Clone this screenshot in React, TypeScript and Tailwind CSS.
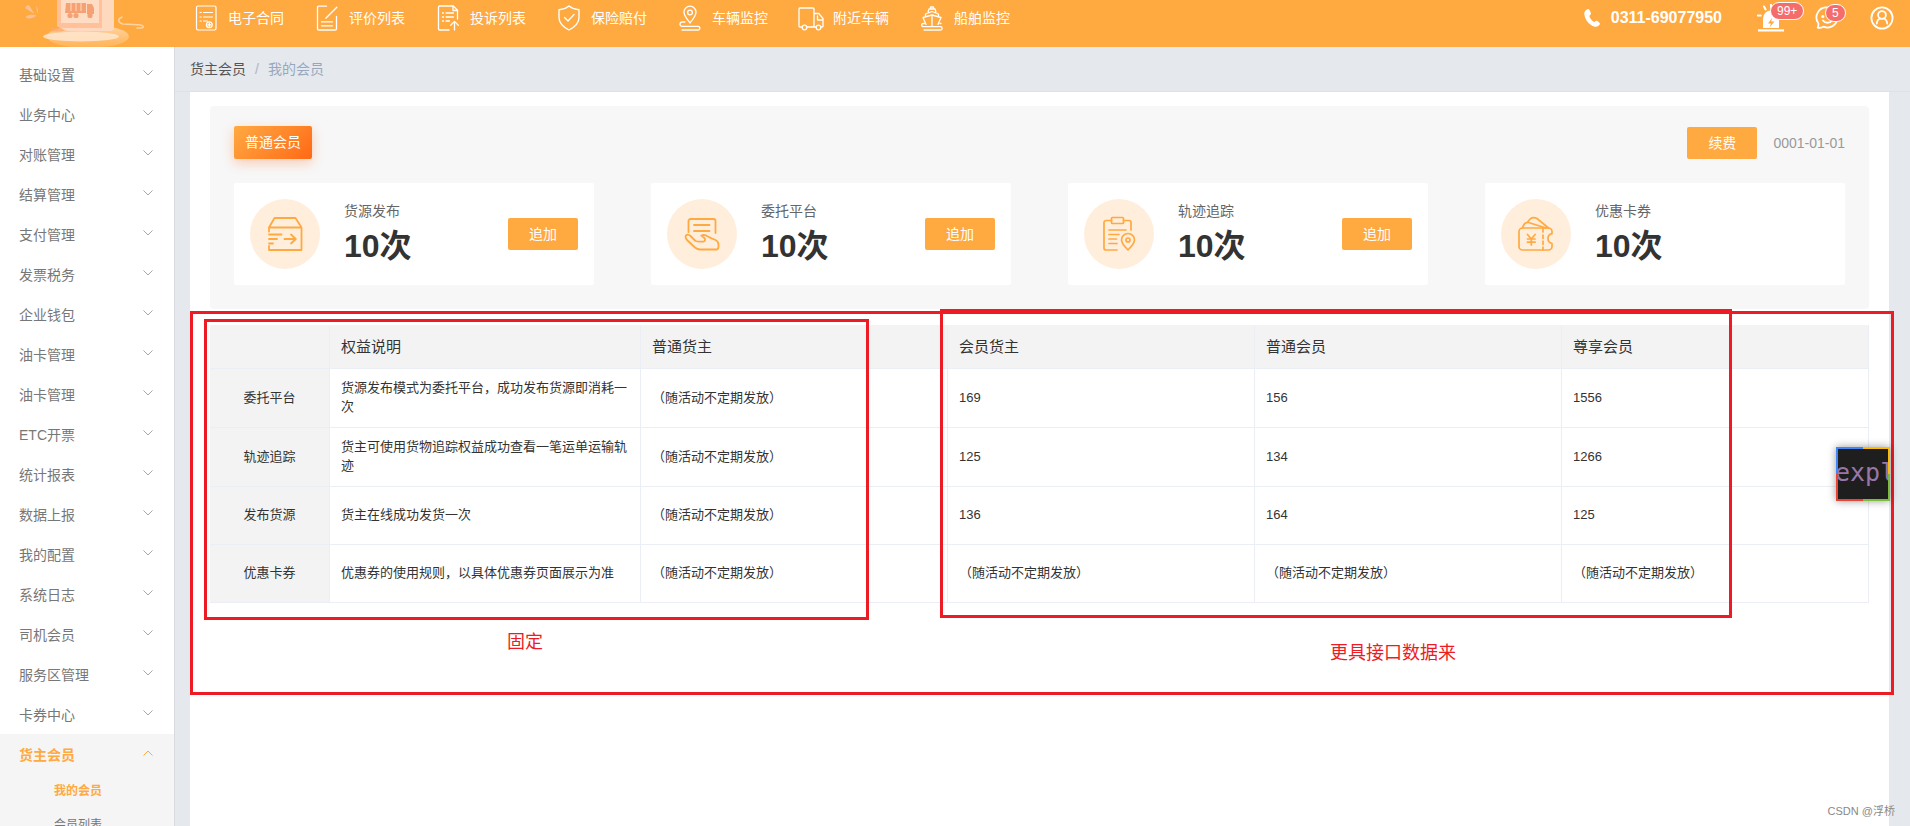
import React from "react";

type IconProps = { className?: string };

const stroke = {
  fill: "none",
  stroke: "currentColor",
  strokeLinecap: "round" as const,
  strokeLinejoin: "round" as const,
};

const ContractIcon = () => (
  <svg viewBox="0 0 26 26" className="h-[26px] w-[26px] shrink-0" {...stroke} strokeWidth="1.2">
    <rect x="3.5" y="1" width="19.5" height="24" rx="1.5" />
    <path d="M7 7.500h1.200M10.500 7.500h9M7 12h1.200M10.500 12h9M7 16h1.200M10.500 16h4" />
    <circle cx="16.300" cy="19.800" r="2.900" />
    <path d="M16.300 18.200v3.200M14.700 19.800h3.200" />
  </svg>
);
const ReviewIcon = () => (
  <svg viewBox="0 0 26 26" className="h-[26px] w-[26px] shrink-0" {...stroke} strokeWidth="1.3">
    <path d="M12.500 1.200H4.700A1.200 1.200 0 0 0 3.500 2.400v21.400A1.200 1.200 0 0 0 4.700 25h16.600a1.200 1.200 0 0 0 1.200-1.200V11.500" />
    <path d="M22.800 2.200 11.800 13.200M7.500 16.800h11M7.500 20.800h11" />
  </svg>
);
const ComplaintIcon = () => (
  <svg viewBox="0 0 26 26" className="h-[26px] w-[26px] shrink-0" {...stroke} strokeWidth="1.3">
    <path d="M14 25H4.700a1.200 1.200 0 0 1-1.200-1.200V2.200A1.200 1.200 0 0 1 4.700 1h13.500L22.500 5.200V14" />
    <path d="M18 1.200v4.300h4.500M7.500 8h1M11 8h7.500M7.500 12h1M11 12h7.500M7.500 16h1M11 16h3.500M19.500 25v-8.500M15.700 20.200l3.800-3.800 3.800 3.800" />
  </svg>
);
const ShieldIcon = () => (
  <svg viewBox="0 0 26 26" className="h-[26px] w-[26px] shrink-0" {...stroke} strokeWidth="1.4">
    <path d="M13 1c2.800 2.200 6.300 3.600 10 3.700v7.800c0 5.500-4.200 9.500-10 12.500-5.800-3-10-7-10-12.500V4.700C6.700 4.600 10.200 3.200 13 1Z" />
    <path d="m8.500 12.500 3.500 3.500 6-6.500" />
  </svg>
);
const TrackIcon = () => (
  <svg viewBox="0 0 26 26" className="h-[26px] w-[26px] shrink-0" {...stroke} strokeWidth="1.3">
    <path d="M13 18C9.500 13.500 7 10.500 7 7.200a6 6 0 0 1 12 0c0 3.300-2.500 6.300-6 10.800Z" />
    <circle cx="13" cy="7.500" r="2.400" />
    <path d="M8 17H4.700a2.200 2.200 0 0 0 0 4.300H21a1.800 1.800 0 0 1 0 3.700H5" />
  </svg>
);
const TruckIcon = () => (
  <svg viewBox="0 0 26 26" className="h-[26px] w-[26px] shrink-0" {...stroke} strokeWidth="1.3">
    <path d="M4 22H2a1 1 0 0 1-1-1V4a1 1 0 0 1 1-1h13a1 1 0 0 1 1 1v18H9M16 8.500h4.800L25 13.500V21a1 1 0 0 1-1 1h-1M18 22h-2M19.500 11v4H25" />
    <circle cx="6.500" cy="22.500" r="2.300" />
    <circle cx="20.500" cy="22.500" r="2.300" />
  </svg>
);
const ShipIcon = () => (
  <svg viewBox="0 0 26 26" className="h-[26px] w-[26px] shrink-0" {...stroke} strokeWidth="1.3">
    <path d="M11.500 4V2h3v2M9 7l1-3h6l1 3M6.500 11.500V9L13 6.500 19.500 9v2.500M13 10v11M7 19.500l-3-7L13 10l9 2.500-3 7" />
    <path d="M5.500 18.500H4.200a1.600 1.600 0 0 0 0 3.200h17.300a1.600 1.600 0 0 1 0 3.300H5M21 18.500h1" />
  </svg>
);

const topNav = [
  { label: "电子合同", Icon: ContractIcon },
  { label: "评价列表", Icon: ReviewIcon },
  { label: "投诉列表", Icon: ComplaintIcon },
  { label: "保险赔付", Icon: ShieldIcon },
  { label: "车辆监控", Icon: TrackIcon },
  { label: "附近车辆", Icon: TruckIcon },
  { label: "船舶监控", Icon: ShipIcon },
];

const Logo = () => (
  <svg viewBox="0 0 193 47" className="h-[47px] w-[193px] shrink-0" aria-hidden="true">
    <defs>
      <linearGradient id="base" x1="0" y1="0" x2="0" y2="1">
        <stop offset="0" stopColor="#fff" stopOpacity=".55" />
        <stop offset="1" stopColor="#ffc680" stopOpacity=".35" />
      </linearGradient>
    </defs>
    <g fill="#ffc39c" opacity=".9">
      <path d="M25 8c1-2 2.500-3 4-3l5.500 9ZM26 16.500c3-2 6-2 10.500-1-3 2.500-7 3.500-10 2.500ZM36 5.500c2 2.500 2.500 5 1.500 8.500Z" />
    </g>
    <ellipse cx="88" cy="36.500" rx="41" ry="11.500" fill="url(#base)" />
    <ellipse cx="81" cy="36.500" rx="38" ry="5" fill="#ffe6cf" opacity=".85" />
    <path d="M50 28h20l-8 3.500H52Z" fill="#ffa767" opacity=".7" />
    <path d="M57 0h57v26c0 3-1 5-4 5H70c-4 0-7-2-13-5Z" fill="#ffd9bd" />
    <path d="M57 0h45v28H65c-5 0-8-1-8-4Z" fill="#ffc09a" />
    <path d="M61 0h38v23H61Z" fill="#ffdcc4" />
    <g fill="#f5a173">
      <path d="M66 3h20v10H65ZM87 4h5l2 4v6h-7Z" />
      <circle cx="70" cy="15.500" r="2.600" />
      <circle cx="76" cy="15.500" r="2.600" />
      <circle cx="90" cy="15.500" r="2.600" />
    </g>
    <path d="M71 3v8M76 3v8M81 3v8" stroke="#ffd1b1" strokeWidth="1.200" />
    <path
      d="M122 17c-5 2-4 6 1 7 7 1 14 0 19 1.500 3 1.500 1 3-5 2.500"
      fill="none"
      stroke="#ffd3a0"
      strokeWidth="1.500"
      strokeLinecap="round"
    />
  </svg>
);

const PhoneIcon = () => (
  <svg viewBox="0 0 16 18" className="h-[18px] w-4 shrink-0" fill="currentColor" aria-hidden="true">
    <path d="M3.500.3c.8-.5 1.500-.1 2 .8l1.300 2.700c.4.900.1 1.500-.6 2.100-.8.600-.9 1.100-.5 2.100.9 2 2 3.400 3.700 4.600.8.500 1.300.4 2-.3.600-.6 1.300-.8 2.100-.2l1.900 1.700c.7.700.7 1.300.1 2-1.300 1.700-3.300 2.300-5.500 1.600C5 15.800.8 10.600.3 5 .1 2.900 1.300 1.200 3.500.3Z" />
  </svg>
);

const AlarmIcon = () => (
  <svg viewBox="0 0 28 28" className="h-7 w-7" fill="currentColor" aria-hidden="true">
    <path d="M6 24V14.500a8 8 0 0 1 16 0V24Z" />
    <path d="M1 25.300h26v2.200H1Z" />
    <path
      d="M14 .8v3M7 2.500l1.600 3M.8 11.500h3M21.500 2.500l-1.800 3.100"
      stroke="currentColor"
      strokeWidth="2"
      strokeLinecap="round"
    />
    <path d="m15 14-4 5.500h3l-1.500 4 5-6h-3.200Z" fill="#ffa941" />
  </svg>
);

const MessageIcon = () => (
  <svg viewBox="0 0 24 24" className="h-6 w-6" {...stroke} strokeWidth="1.800" aria-hidden="true">
    <path d="M12.500 1.500a10 10 0 1 1-4 19.200c-1.800 1-3.800 1.300-5.800 1.100.7-1.600.9-3.100.6-4.600A10 10 0 0 1 12.500 1.500Z" />
    <path d="M8 14.500c2 3 7 3 9 0" />
    <circle cx="7.800" cy="10.500" r=".7" fill="currentColor" />
  </svg>
);

const UserIcon = () => (
  <svg viewBox="0 0 24 24" className="h-6 w-6" {...stroke} strokeWidth="1.800" aria-hidden="true">
    <circle cx="12" cy="12" r="10.600" />
    <circle cx="12" cy="9" r="3.900" />
    <path d="M6.800 17.500c.2-2.600 1.400-4.400 3.500-5M17.200 17.500c-.2-2.600-1.400-4.400-3.500-5" />
  </svg>
);

const BoxIcon = () => (
  <svg viewBox="0 0 36 36" className="h-9 w-9" {...stroke} strokeWidth="1.800">
    <path d="M2 15.500v-4L7.500 2h21L34.500 11.500V34H2v-4M2 11.500h32.500M2 18.500h12.500M2 23h8M2 27.500h4M17.500 23h11M24 18.500l4.800 4.500-4.800 4.500" />
  </svg>
);
const HandIcon = () => (
  <svg viewBox="0 0 36 36" className="h-9 w-9" {...stroke} strokeWidth="1.800">
    <path d="M4.500 16V5a2 2 0 0 1 2-2h23a2 2 0 0 1 2 2v12M10 9h15.500M10 15h15.500" />
    <path d="M2 19.500c1.500-1.500 3.500-.5 4.500.5l5 5c2 .8 5.500.5 8 .7 1.800-.5 2-2.700.8-3.700l-3-2.500c2.500-1 5-.2 6.700 1 3.500 2.200 5 2.300 7.500 3.500 2.500 1 3 3 3 5s.3 4-1.500 4.500H16c-2 0-3.500-.8-5-2l-7.500-7C1.500 22.500 1 21 2 19.500Z" />
  </svg>
);
const ClipboardIcon = () => (
  <svg viewBox="0 0 36 36" className="h-9 w-9" {...stroke} strokeWidth="1.700">
    <path d="M16 34H5a2 2 0 0 1-2-2V6.500a2 2 0 0 1 2-2h5.500M22.500 4.500H28a2 2 0 0 1 2 2V14" />
    <rect x="10.500" y="1.500" width="12" height="6" rx="1" />
    <path d="M8 14h17M8 18.500h10M8 23h7.500M8 27.500h8M27 34c-4-4-6.500-7-6.500-10a6.500 6.500 0 0 1 13 0c0 3-2.500 6-6.500 10Z" />
    <circle cx="27" cy="24" r="2" />
  </svg>
);
const CouponIcon = () => (
  <svg viewBox="0 0 36 36" className="h-9 w-9" {...stroke} strokeWidth="1.700">
    <path d="M4.500 12h26a3.500 3.500 0 0 1 3.500 3.500v2.200a5 5 0 0 0 0 9.800v3a3.500 3.500 0 0 1-3.500 3.500h-26A3.500 3.500 0 0 1 1 30.500v-15A3.500 3.500 0 0 1 4.500 12Z" />
    <path d="M4.500 12C5.500 8.500 7.500 6 10.500 6.500L28 12M9.500 6.200C12 2 15.500.5 19 2.500L30.500 12M25 12v4M25 19v3.500M25 25v3.500M25 31v3M9.500 18.500l3.800 4.500 3.800-4.500M9.500 23h7.600M9.500 26.200h7.600M13.300 23v6" />
  </svg>
);

const ChevronIcon = ({ className }: IconProps) => (
  <svg viewBox="0 0 12 12" className={className} fill="none" stroke="currentColor" strokeWidth="1">
    <path d="m1.500 3.500 4.500 4.500 4.500-4.500" />
  </svg>
);

const menu = [
  "基础设置",
  "业务中心",
  "对账管理",
  "结算管理",
  "支付管理",
  "发票税务",
  "企业钱包",
  "油卡管理",
  "油卡管理",
  "ETC开票",
  "统计报表",
  "数据上报",
  "我的配置",
  "系统日志",
  "司机会员",
  "服务区管理",
  "卡券中心",
];

const cards = [
  { title: "货源发布", count: "10次", Icon: BoxIcon, add: true },
  { title: "委托平台", count: "10次", Icon: HandIcon, add: true },
  { title: "轨迹追踪", count: "10次", Icon: ClipboardIcon, add: true },
  { title: "优惠卡券", count: "10次", Icon: CouponIcon, add: false },
];

const random = "（随活动不定期发放）";
const columns = ["", "权益说明", "普通货主", "会员货主", "普通会员", "尊享会员"];
const rows = [
  { h: "h-[59px]", cells: ["委托平台", "货源发布模式为委托平台，成功发布货源即消耗一次", random, "169", "156", "1556"] },
  { h: "h-[59px]", cells: ["轨迹追踪", "货主可使用货物追踪权益成功查看一笔运单运输轨迹", random, "125", "134", "1266"] },
  { h: "h-[58px]", cells: ["发布货源", "货主在线成功发货一次", random, "136", "164", "125"] },
  { h: "h-[58px]", cells: ["优惠卡券", "优惠券的使用规则，以具体优惠券页面展示为准", random, random, random, random] },
];

function Header() {
  return (
    <header className="h-[47px] shrink-0 bg-[#ffa941] text-white">
      <div className="flex items-start">
        <Logo />
        <nav className="flex h-9 items-center gap-[30px]">
          {topNav.map(({ label, Icon }) => (
            <a key={label} href="#" className="flex items-center gap-[9px] whitespace-nowrap text-sm">
              <Icon />
              {label}
            </a>
          ))}
        </nav>
        <div className="ml-auto flex h-9 items-center pr-4">
          <div className="flex items-center gap-[11px] text-base font-bold">
            <PhoneIcon />
            0311-69077950
          </div>
          <button aria-label="报警" className="relative ml-[35px]">
            <AlarmIcon />
            <span className="absolute -top-0.5 left-[13px] flex h-[18px] items-center rounded-full border border-white bg-[#f56c6c] px-[6px] text-xs">
              99+
            </span>
          </button>
          <button aria-label="消息" className="relative ml-[30px]">
            <MessageIcon />
            <span className="absolute -top-0.5 left-[10px] flex h-[18px] items-center rounded-full border border-white bg-[#f56c6c] px-[6px] text-xs">
              5
            </span>
          </button>
          <button aria-label="用户" className="ml-[31px]">
            <UserIcon />
          </button>
        </div>
      </div>
    </header>
  );
}

function Sidebar() {
  return (
    <aside className="w-[175px] shrink-0 overflow-hidden border-r border-[#d8dadd] bg-white pt-[7px]">
      {menu.map((label, i) => (
        <button
          key={i}
          className="flex h-10 w-full items-center justify-between pt-0.5 pr-5 pl-[19px] text-sm text-[#777]"
        >
          {label}
          <ChevronIcon className="mb-1 h-3 w-3 text-[#a3a6ad]" />
        </button>
      ))}
      <div className="bg-[#f5f5f5]">
        <button className="flex h-10 w-full items-center justify-between pt-0.5 pr-5 pl-[19px] text-sm font-bold text-[#ffa941]">
          货主会员
          <ChevronIcon className="mb-1 h-3 w-3 rotate-180" />
        </button>
        <a href="#" className="flex h-[34px] items-center pl-[54px] text-xs font-bold text-[#ffa941]">
          我的会员
        </a>
        <a href="#" className="flex h-[34px] items-center pl-[54px] text-xs text-[#777]">
          会员列表
        </a>
      </div>
    </aside>
  );
}

function Summary() {
  return (
    <section className="rounded-sm bg-[#f7f7f7] px-6 pt-5 pb-6">
      <div className="flex items-center justify-between">
        <span className="flex h-[33px] items-center rounded-xs bg-linear-135 from-[#ffa941] to-[#ff6812] px-[11px] pb-0.5 text-sm text-white shadow-[0_4px_12px_rgba(255,104,18,0.3)]">
          普通会员
        </span>
        <div className="flex items-center gap-4 text-sm text-[#999]">
          <button className="h-8 w-[70px] rounded-xs bg-[#ffa941] text-white">续费</button>
          0001-01-01
        </div>
      </div>
      <div className="mt-6 grid grid-cols-4 gap-[57px]">
        {cards.map(({ title, count, Icon, add }) => (
          <article key={title} className="flex items-center rounded-xs bg-white p-4">
            <div className="flex h-[70px] w-[70px] items-center justify-center rounded-full bg-[#ffeedc] text-[#ffa941]">
              <Icon />
            </div>
            <div className="ml-6">
              <div className="text-sm text-[#666]">{title}</div>
              <div className="mt-1 text-[32px] leading-[42px] font-bold text-[#333]">{count}</div>
            </div>
            {add && (
              <button className="ml-auto h-8 w-[70px] rounded-xs bg-[#ffa941] text-sm text-white">追加</button>
            )}
          </article>
        ))}
      </div>
    </section>
  );
}

function Benefits() {
  return (
    <table className="mt-4 w-full table-fixed border-separate border-spacing-0 text-left text-[13px] leading-[19px] text-[#333]">
      <colgroup>
        <col className="w-[120px]" />
        <col className="w-[311px]" />
        <col />
        <col />
        <col />
        <col />
      </colgroup>
      <thead>
        <tr className="h-11 bg-[#f3f3f3] text-[15px]">
          {columns.map((c, i) => (
            <th key={i} scope="col" className="border-r border-b border-[#ebeef5] pr-2.5 pl-[11px] font-normal">
              {c}
            </th>
          ))}
        </tr>
      </thead>
      <tbody>
        {rows.map(({ h, cells }) => (
          <tr key={cells[0]} className={h}>
            <th scope="row" className="border-r border-b border-[#ebeef5] bg-[#f3f3f3] pb-0.5 text-center font-normal">
              {cells[0]}
            </th>
            {cells.slice(1).map((c, i) => (
              <td key={i} className="border-r border-b border-[#ebeef5] pr-2.5 pb-0.5 pl-[11px]">
                {c}
              </td>
            ))}
          </tr>
        ))}
      </tbody>
    </table>
  );
}

function Annotations() {
  return (
    <div className="pointer-events-none absolute inset-0 text-lg leading-6 text-[#ed1c24]">
      <div className="absolute top-[219px] -right-[5px] left-0 h-[384px] border-[3px] border-[#ed1c24]" />
      <div className="absolute top-[227px] left-[14px] h-[301px] w-[665px] border-[3px] border-[#ed1c24]" />
      <div className="absolute top-[217px] left-[750px] h-[309px] w-[792px] border-[3px] border-[#ed1c24]" />
      <span className="absolute top-[538px] left-[317px]">固定</span>
      <span className="absolute top-[549px] left-[1140px]">更具接口数据来</span>
    </div>
  );
}

function FloatingWidget() {
  return (
    <div className="absolute top-[355px] -right-px grid h-[54px] w-[54px] grid-cols-2 shadow-[0_0_8px_rgba(0,0,0,0.4)]">
      <span className="bg-[#4285f4]" />
      <span className="bg-[#fbbc05]" />
      <span className="bg-[#ea4335]" />
      <span className="bg-[#7cbb3c]" />
      <div className="absolute inset-0.5 flex items-center overflow-hidden bg-[#1e1e1e] pb-0.5 font-['DejaVu_Sans_Mono',monospace] text-[25px] text-[#9876aa]">
        <span className="-ml-[3px]">expl</span>
      </div>
    </div>
  );
}

export default function App() {
  return (
    <div className="flex h-screen flex-col overflow-hidden bg-[#e5e8ed] font-['Liberation_Sans','Noto_Sans_CJK_SC',sans-serif]">
      <Header />
      <div className="flex min-h-0 flex-1">
        <Sidebar />
        <div className="flex min-w-0 flex-1 flex-col">
          <nav
            aria-label="面包屑"
            className="flex h-[45px] shrink-0 items-center gap-[9px] border-b border-[#dfe1e4] pl-[15px] text-sm"
          >
            <a href="#" className="text-[#555]">货主会员</a>
            <span className="text-[#b0b5be]">/</span>
            <span className="text-[#97a8be]">我的会员</span>
          </nav>
          <main className="relative mr-[21px] ml-[15px] flex-1 bg-white px-5 pt-3.5">
            <Summary />
            <Benefits />
            <Annotations />
            <FloatingWidget />
            <span className="absolute -right-[6px] bottom-[7px] text-[11px] leading-4 text-[#888]">CSDN @浮桥</span>
          </main>
        </div>
      </div>
    </div>
  );
}
